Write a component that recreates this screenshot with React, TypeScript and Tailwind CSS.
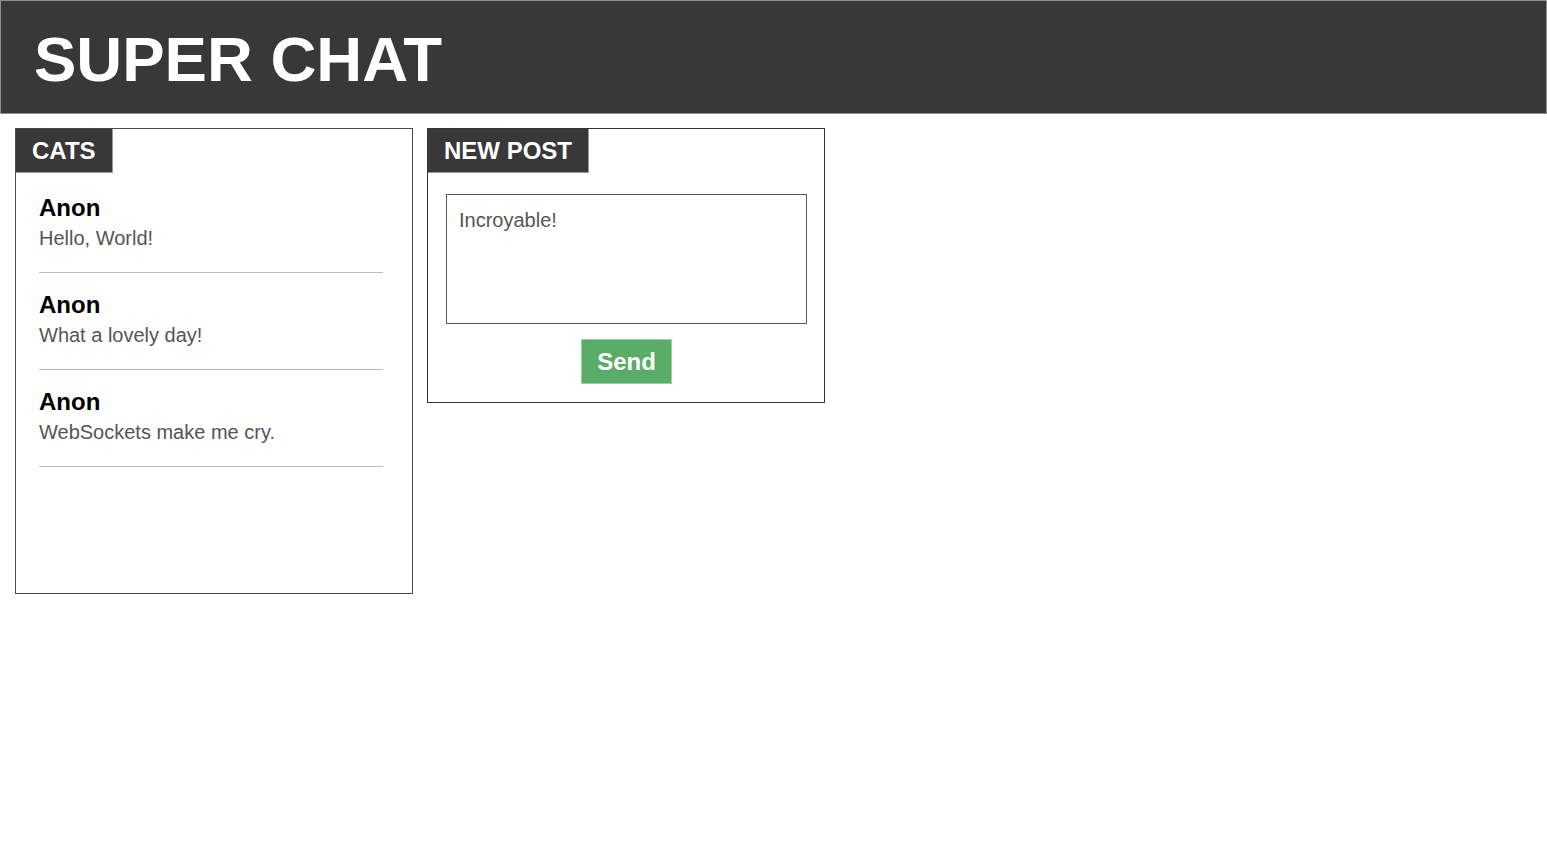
import React from "react";

const messages = [
  { name: "Anon", text: "Hello, World!" },
  { name: "Anon", text: "What a lovely day!" },
  { name: "Anon", text: "WebSockets make me cry." },
];

function Tab({ label }: { label: string }) {
  return (
    <div className="flex">
      <div className="h-[44px] bg-[#383838] border-r border-b border-[#9a9a9a] pl-[16px] pr-[16px] text-[24px] font-bold leading-[44px] text-white">
        {label}
      </div>
    </div>
  );
}

export default function App() {
  return (
    <div
      className="min-h-[868px] w-full bg-white"
      style={{ fontFamily: '"Liberation Sans", Arial, Helvetica, sans-serif' }}
    >
      <header className="h-[114px] border border-[#8f8f8f] bg-[#383838] pl-[33px] pt-[27px]">
        <h1 className="text-[63.5px] font-bold leading-none text-white">SUPER CHAT</h1>
      </header>
      <div className="flex items-start gap-[14px] pl-[15px] pt-[14px]">
        <section className="h-[466px] w-[398px] border border-[#4a4a4a]">
          <Tab label="CATS" />
          <div className="flex flex-col gap-[18px] pl-[23px] pr-[29px] pt-[21px]">
            {messages.map((m, i) => (
              <div key={i} className="border-b border-[#bdbdbd] pb-[22px]">
                <div className="text-[24px] font-bold leading-[28px] text-black">{m.name}</div>
                <div className="mt-[4px] text-[20px] leading-[24px] text-[#555555]">{m.text}</div>
              </div>
            ))}
          </div>
        </section>
        <section className="w-[398px] border border-[#333333] pb-[18px]">
          <Tab label="NEW POST" />
          <div className="flex flex-col items-center pl-[18px] pr-[17px] pt-[21px]">
            <div className="h-[130px] w-full border border-[#5a5a5a] pl-[12px] pr-[12px] pt-[13px] text-[20px] leading-[24px] text-[#555555]">
              Incroyable!
            </div>
            <button className="mt-[15px] h-[45px] w-[91px] border border-[#9fcfa5] bg-[#5aad66] text-[24px] font-bold text-white">
              Send
            </button>
          </div>
        </section>
      </div>
    </div>
  );
}
